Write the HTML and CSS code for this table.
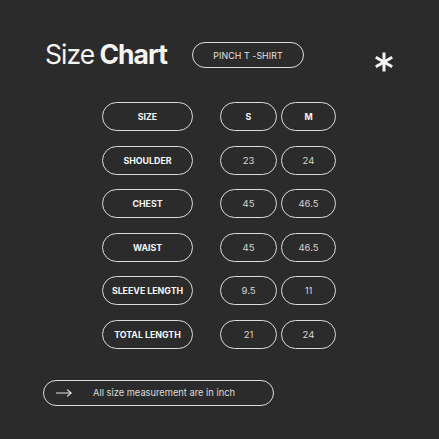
FILE: index.html
```html
<!DOCTYPE html>
<html>
<head>
<meta charset="utf-8">
<link rel="stylesheet" href="styles.css">
</head>
<body>
<div class="page">
  <header class="header">
    <h1 class="title"><span class="light">Size</span> <span class="bold">Chart</span></h1>
    <div class="pill tag">PINCH T -SHIRT</div>
    <svg class="star" width="20" height="20" viewBox="0 0 20 20">
      <g stroke="#f4f4f2" stroke-width="3" stroke-linecap="butt">
        <line x1="10" y1="0.5" x2="10" y2="19.5"/>
        <line x1="1.8" y1="5.2" x2="18.2" y2="14.8"/>
        <line x1="1.8" y1="14.8" x2="18.2" y2="5.2"/>
      </g>
    </svg>
  </header>

  <div class="table">
    <div class="row"><div class="pill label">SIZE</div><div class="pill val s head">S</div><div class="pill val m head">M</div></div>
    <div class="row"><div class="pill label">SHOULDER</div><div class="pill val s">23</div><div class="pill val m">24</div></div>
    <div class="row"><div class="pill label">CHEST</div><div class="pill val s">45</div><div class="pill val m">46.5</div></div>
    <div class="row"><div class="pill label">WAIST</div><div class="pill val s">45</div><div class="pill val m">46.5</div></div>
    <div class="row"><div class="pill label">SLEEVE LENGTH</div><div class="pill val s">9.5</div><div class="pill val m">11</div></div>
    <div class="row"><div class="pill label">TOTAL LENGTH</div><div class="pill val s">21</div><div class="pill val m">24</div></div>
  </div>

  <div class="pill note">
    <svg class="arrow" width="16" height="8" viewBox="0 0 16 8">
      <g fill="none" stroke="#e6e6e6" stroke-width="1.1" stroke-linecap="round" stroke-linejoin="round">
        <line x1="0.5" y1="4" x2="15" y2="4"/>
        <polyline points="11.5,0.8 15,4 11.5,7.2"/>
      </g>
    </svg>
    <span class="note-text">All size measurement are in inch</span>
  </div>
</div>
</body>
</html>
```

FILE: styles.css
```css
* { box-sizing: border-box; margin: 0; padding: 0; }
html, body { background: #2b2b2b; }
body {
  width: 439px;
  height: 439px;
  overflow: hidden;
  font-family: Inter, "Noto Sans", sans-serif;
  color: #f2f2f0;
}
.page {
  display: flex;
  flex-direction: column;
  padding-top: 40px;
}
.header {
  display: flex;
  align-items: center;
  height: 28px;
  padding-left: 45px;
  padding-right: 45px;
}
.title {
  width: 147px;
  font-size: 26.5px;
  line-height: 28px;
  letter-spacing: -1px;
  white-space: nowrap;
  color: #f4f4f0;
}
.title .light { font-weight: 400; }
.title .bold { font-weight: 700; }
.pill {
  display: flex;
  align-items: center;
  justify-content: center;
  border: 1.5px solid #dcdcd8;
  border-radius: 999px;
}
.tag {
  width: 112px;
  height: 26px;
  margin-top: 2px;
  font-size: 8.8px;
  color: #e2e2e0;
  letter-spacing: 0.1px;
}
.star {
  margin-left: auto;
  margin-top: 16px;
}
.table {
  display: flex;
  flex-direction: column;
  gap: 14.5px;
  margin-top: 34px;
  padding-left: 102px;
}
.row {
  display: flex;
  height: 29px;
}
.label {
  width: 91px;
  margin-right: 27px;
  font-size: 8.8px;
  font-weight: 700;
  color: #f6f6f4;
}
.val {
  font-size: 9.5px;
  color: #d6d6d4;
}
.val.head {
  font-weight: 700;
  font-size: 8.8px;
  color: #f6f6f4;
}
.s { width: 57px; margin-right: 4px; }
.m { width: 55px; }
.note {
  justify-content: flex-start;
  width: 231px;
  height: 26px;
  margin-top: 31px;
  margin-left: 43px;
  padding-left: 12px;
}
.arrow { flex: none; }
.note-text {
  margin-left: 21px;
  font-size: 9.3px;
  color: #dcdcda;
}
```
